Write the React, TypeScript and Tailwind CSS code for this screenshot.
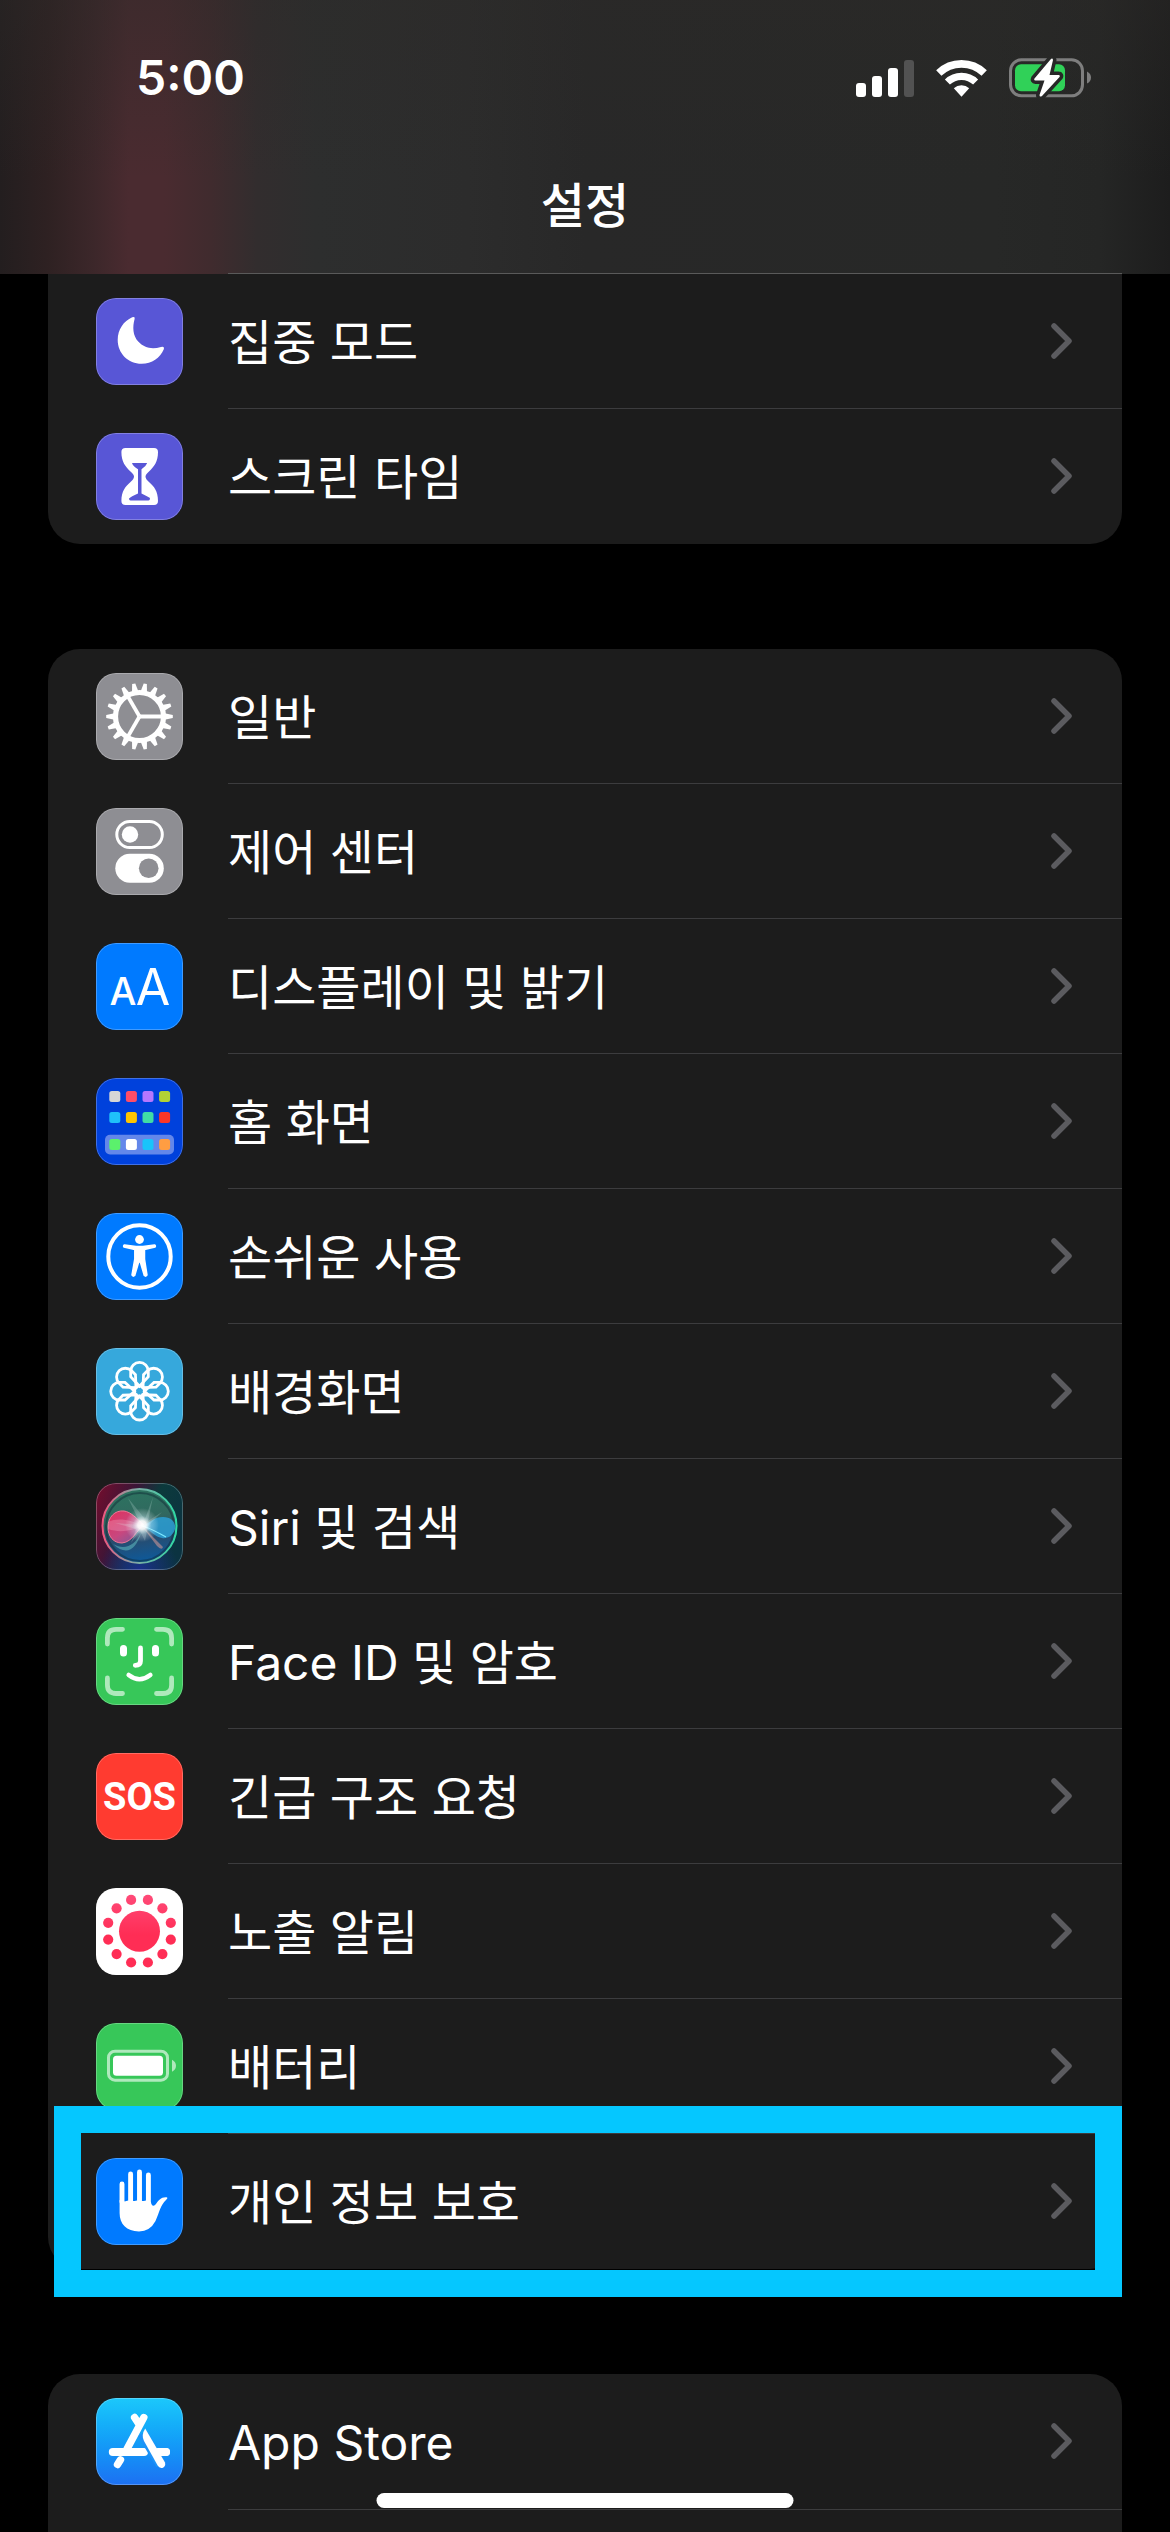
import type { ReactNode } from "react";

type Item = {
  id: string;
  label: string;
  tile: string;
  icon: ReactNode;
  highlighted?: boolean;
};

const turns = (count: number, offset = 0) =>
  Array.from({ length: count }, (_, i) => offset + (i * 360) / count);

const moon = (
  <path
    fill="#fff"
    d="M36.2 19.2Q39.4 18.2 38.6 21C36.4 29 36.8 37.5 42.2 43.6C48.3 50.3 56.5 51.4 65 48.9Q68.9 48 67.7 51.6C64 60 56 65.8 45.6 65.8C32.2 65.8 21.7 55.3 21.7 42C21.7 31.5 27.6 23 36.2 19.2Z"
  />
);

const hourglass = (
  <>
    <path
      fill="#fff"
      d="M29.500 15H58Q62 15 62 19C62 29 58 33.500 53 38.500Q49.500 41.500 49.500 43.500Q49.500 46 53 49C58 53.500 62 58 62 68Q62 72 58 72H29.500Q25.400 72 25.400 68C25.400 58 29.500 53.500 34.500 49Q38 46 38 43.500Q38 41.500 34.500 38.500C29.500 33.500 25.400 29 25.400 19Q25.400 15 29.500 15Z"
    />
    <path
      fill="#5856d6"
      d="M36 30H51.200Q50 33.500 45.500 36.300V60.500Q52 63.500 54 65Q54 67.500 52.500 67.500H34.500Q33 67.500 33 65.500Q35 63.500 42 60.500V36.300Q37 33.500 36 30Z"
    />
  </>
);

const gear = (
  <g transform="translate(43.500 43.500)">
    {turns(18).map((angle) => (
      <path key={angle} d="M25-3.200L33.300-1.600V1.600L25 3.200Z" fill="#fff" transform={`rotate(${angle})`} />
    ))}
    <circle r="24" fill="none" stroke="#fff" strokeWidth="5.200" />
    {turns(3).map((angle) => (
      <path key={angle} d="M0 0H23" stroke="#fff" strokeWidth="3.800" transform={`rotate(${angle})`} />
    ))}
  </g>
);

const toggles = (
  <>
    <rect x="20.800" y="13.500" width="45.500" height="26" rx="13" fill="none" stroke="#fff" strokeWidth="3" />
    <circle cx="34" cy="26.500" r="8.200" fill="#fff" />
    <rect x="19.300" y="45.800" width="48.500" height="29" rx="14.500" fill="#fff" />
    <circle cx="52.700" cy="60.300" r="9.800" fill="#8e8e93" />
  </>
);

const textSize = (
  <g fill="#fff" fontFamily="Inter, sans-serif" textAnchor="middle">
    <text x="27" y="62" fontSize="38" fontWeight="500">
      A
    </text>
    <text x="57" y="62" fontSize="50" fontWeight="400">
      A
    </text>
  </g>
);

const homeColors = [
  ["#d6d6d6", "#ff4d67", "#b677ff", "#b2d235"],
  ["#1fc0fa", "#ffc502", "#40dca5", "#fc3628"],
  ["#5bf16c", "#ffffff", "#19c4fa", "#ff9d42"],
];
const homeRows = [13, 34, 61];

const homeScreen = (
  <>
    <rect x="9" y="56.700" width="69" height="19.800" rx="5" fill="#6387ea" />
    {homeColors.map((row, r) =>
      row.map((color, c) => (
        <rect key={color} x={13.3 + c * 16.6} y={homeRows[r]} width="11" height="11" rx="2.500" fill={color} />
      )),
    )}
  </>
);

const accessibility = (
  <>
    <circle cx="43.500" cy="43.500" r="31.200" fill="none" stroke="#fff" strokeWidth="4" />
    <circle cx="43.500" cy="26.500" r="4.400" fill="#fff" />
    <path
      fill="#fff"
      stroke="#fff"
      strokeWidth="1.500"
      strokeLinejoin="round"
      d="M28.500 32L40 33.600H47L58.500 32Q60 32.700 59 34L48.500 36.500V46L51 62Q50 64 48.300 62.500L44.300 49H42.700L38.700 62.500Q37 64 36 62L38.800 46V36.500L28 34Q27 32.700 28.500 32Z"
    />
  </>
);

const flower = (
  <g transform="translate(43.500 43.200)" fill="none" stroke="#fff" strokeWidth="2.800">
    {turns(8).map((angle) => (
      <path key={angle} d="M0-5L-8.800-14.500V-20A8.800 8.800 0 0 1 8.800-20V-14.500Z" transform={`rotate(${angle})`} />
    ))}
    <circle r="5" />
  </g>
);

const siri = (
  <>
    <defs>
      <linearGradient id="siri-base" x1="0" y1="0.200" x2="1" y2="0.600">
        <stop offset="0" stopColor="#6d0e2e" />
        <stop offset="0.350" stopColor="#3a1637" />
        <stop offset="0.600" stopColor="#0c3a3c" />
        <stop offset="1" stopColor="#0b3341" />
      </linearGradient>
      <linearGradient id="siri-orb" x1="0.350" y1="0" x2="0.500" y2="1">
        <stop offset="0" stopColor="#2c7460" />
        <stop offset="0.400" stopColor="#31685f" />
        <stop offset="0.650" stopColor="#2a4b6b" />
        <stop offset="1" stopColor="#0c5a9c" />
      </linearGradient>
      <linearGradient id="siri-ring" x1="0" y1="0.500" x2="1" y2="0.500">
        <stop offset="0" stopColor="#f0567e" />
        <stop offset="0.450" stopColor="#7fa9a4" />
        <stop offset="1" stopColor="#2fd9a4" />
      </linearGradient>
      <linearGradient id="siri-pink" x1="0" y1="0" x2="0.800" y2="1">
        <stop offset="0" stopColor="#e0315c" />
        <stop offset="0.600" stopColor="#c8477f" />
        <stop offset="1" stopColor="#7c5b9b" />
      </linearGradient>
      <radialGradient id="siri-blue-corner" cx="0.500" cy="1" r="0.450">
        <stop offset="0" stopColor="#1b2f8c" />
        <stop offset="1" stopColor="#1b2f8c" stopOpacity="0" />
      </radialGradient>
      <radialGradient id="siri-glow">
        <stop offset="0" stopColor="#fff" />
        <stop offset="0.250" stopColor="#fff" stopOpacity="0.900" />
        <stop offset="0.550" stopColor="#d9f6ff" stopOpacity="0.350" />
        <stop offset="1" stopColor="#fff" stopOpacity="0" />
      </radialGradient>
    </defs>
    <rect width="87" height="87" fill="url(#siri-base)" />
    <rect width="87" height="87" fill="url(#siri-blue-corner)" />
    <circle cx="43.500" cy="43" r="37" fill="url(#siri-orb)" stroke="url(#siri-ring)" strokeWidth="2" />
    <circle cx="44" cy="44" r="34" fill="none" stroke="#0d2634" strokeWidth="2" opacity="0.450" />
    <path
      d="M12 44C12 34 19 27 28 28C35 29 40 35 48 42C41 46 37 59 26 60C17 60 12 53 12 44Z"
      fill="url(#siri-pink)"
      stroke="#ef7795"
      strokeWidth="1"
    />
    <path d="M12 39C22 34 36 37 46 43C36 48 23 50 12 46Z" fill="#ffb7cb" opacity="0.280" />
    <path d="M46 43C55 39 58 34 67 34C76 34 80 40 79 46C77 53 71 56 66 55C58 54 55 47 46 43Z" fill="#2b9fd3" opacity="0.850" />
    <path d="M46 43C55 45 62 50 70 54" stroke="#7de9ff" strokeWidth="1.200" fill="none" />
    <path d="M46 43L67 64Q66 68 61 63Z" fill="#d89a98" opacity="0.550" />
    <path d="M17 61C29 68 39 62 45 50C40 66 31 74 17 61Z" fill="#6fd3ce" opacity="0.450" />
    <path d="M45 42L32 15L49 36L57 14L52 38L66 29L52 43L49 58L44 48L35 60L40 46L19 40Z" fill="#dffcf4" opacity="0.200" />
    <circle cx="46" cy="42" r="17" fill="url(#siri-glow)" />
  </>
);

const faceId = (
  <g fill="none" stroke="#fff" strokeLinecap="round">
    <path
      strokeWidth="4.800"
      opacity="0.600"
      d="M11.400 26V20Q11.400 11.300 20 11.300H26.500M60.500 11.300H67Q75.600 11.300 75.600 20V26M75.600 60V67Q75.600 75.500 67 75.500H60.500M26.500 75.500H20Q11.400 75.500 11.400 67V60"
    />
    <path strokeWidth="7" d="M27.500 30.500V35M59.500 30.500V35" />
    <path strokeWidth="4.800" d="M44.500 30V43Q44.500 47.300 39.300 47.300" />
    <path strokeWidth="4.600" d="M32.700 57Q43.500 65.500 54.300 57" />
  </g>
);

const sos = (
  <text
    x="43.500"
    y="57"
    fill="#fff"
    fontFamily="Roboto, sans-serif"
    fontSize="38"
    fontWeight="700"
    textAnchor="middle"
  >
    SOS
  </text>
);

const exposure = (
  <>
    <defs>
      <linearGradient id="exposure" gradientUnits="userSpaceOnUse" x1="0" y1="-36" x2="0" y2="36">
        <stop offset="0" stopColor="#ff4a78" />
        <stop offset="0.550" stopColor="#ff2d55" />
      </linearGradient>
    </defs>
    <g transform="translate(43.500 43.200)" fill="url(#exposure)">
      <circle r="20.500" />
      {turns(12, 15).map((angle) => {
        const rad = (angle * Math.PI) / 180;
        return <circle key={angle} cx={32.4 * Math.cos(rad)} cy={32.4 * Math.sin(rad)} r="5.100" />;
      })}
    </g>
  </>
);

const battery = (
  <>
    <rect x="12.500" y="28.200" width="59" height="29" rx="6.500" fill="none" stroke="#fff" strokeWidth="3" opacity="0.600" />
    <rect x="17" y="32.700" width="50" height="20" rx="3.500" fill="#fff" />
    <path d="M76 36.800Q80 39 80 42.700Q80 46.500 76 48.800Z" fill="#fff" opacity="0.600" />
  </>
);

const hand = (
  <>
    <path
      d="M26 26V44M34.600 16V46M43.500 14V46M52.400 17V46"
      stroke="#fff"
      strokeWidth="4.900"
      strokeLinecap="round"
    />
    <path
      fill="#fff"
      d="M23.600 42Q26 44.500 32.200 42.500Q36 43.500 41 42.500Q46 43.500 50 42.500L54.900 44Q56 50 59.500 46.500C62.500 42.500 65.500 38.500 71.200 39.400Q72 40.300 70 42C64.500 47 63.500 54 59.500 63Q54 73.400 43 73.400C30.500 73.400 23.600 66 23.600 55Z"
    />
  </>
);

const appStore = (
  <g fill="none" stroke="#fff" strokeWidth="7.400" strokeLinecap="round">
    <path d="M38.600 19.500L43.500 27M47.800 19.500L31 51" />
    <path d="M16.800 54H48" strokeWidth="8" />
    <path d="M58 54H70" strokeWidth="8" />
    <path d="M46.500 35.500L65 66.500" stroke="#1d93f8" strokeWidth="10.500" strokeLinecap="butt" />
    <path d="M62 54H70" strokeWidth="8" />
    <path fill="#fff" stroke="none" d="M49.200 30.500L69 64.500Q70 68 67 69.700Q63.500 70.700 61.800 67.800L48 43Q45 37 49.200 30.500Z" />
    <path d="M24.500 61.800L21.500 66.500" />
  </g>
);

const focusItems: Item[] = [
  { id: "focus", label: "집중 모드", tile: "bg-[#5856d6]", icon: moon },
  { id: "screen-time", label: "스크린 타임", tile: "bg-[#5856d6]", icon: hourglass },
];

const generalItems: Item[] = [
  { id: "general", label: "일반", tile: "bg-[#8e8e93]", icon: gear },
  { id: "control-center", label: "제어 센터", tile: "bg-[#8e8e93]", icon: toggles },
  { id: "display", label: "디스플레이 및 밝기", tile: "bg-[#007aff]", icon: textSize },
  { id: "home-screen", label: "홈 화면", tile: "bg-[#0041dc]", icon: homeScreen },
  { id: "accessibility", label: "손쉬운 사용", tile: "bg-[#007aff]", icon: accessibility },
  { id: "wallpaper", label: "배경화면", tile: "bg-[#36a8dc]", icon: flower },
  { id: "siri", label: "Siri 및 검색", tile: "bg-[#0b3341]", icon: siri },
  { id: "face-id", label: "Face ID 및 암호", tile: "bg-[#37c759]", icon: faceId },
  { id: "sos", label: "긴급 구조 요청", tile: "bg-[#ff3b30]", icon: sos },
  { id: "exposure", label: "노출 알림", tile: "bg-white", icon: exposure },
  { id: "battery", label: "배터리", tile: "bg-[#37c759]", icon: battery },
  { id: "privacy", label: "개인 정보 보호", tile: "bg-[#007aff]", icon: hand, highlighted: true },
];

const storeItems: Item[] = [
  { id: "app-store", label: "App Store", tile: "bg-linear-to-b from-[#1cc8fb] to-[#1d70f2]", icon: appStore },
];

function Row({ item }: { item: Item }) {
  return (
    <li className="group relative">
      <a href={`#${item.id}`} className="flex h-[135px] items-center pl-12">
        <span className={`relative size-[87px] shrink-0 overflow-hidden rounded-[20px] ${item.tile}`}>
          <svg viewBox="0 0 87 87" className="size-full" aria-hidden="true">
            {item.icon}
          </svg>
          <span className="absolute inset-0 rounded-[20px] border border-white/25" />
        </span>
        <span className="ml-[45px] flex h-full flex-1 items-center justify-between border-b border-[#3c3c3e] pr-[50px] group-last:border-transparent">
          <span className="pt-1 text-[48px] leading-[60px] text-white">{item.label}</span>
          <svg viewBox="0 0 21 36" className="h-9 w-[21px]" fill="none" aria-hidden="true">
            <path d="M3 3L18 18L3 33" stroke="#5b5b5f" strokeWidth="5.500" strokeLinecap="round" strokeLinejoin="round" />
          </svg>
        </span>
      </a>
      {item.highlighted && (
        <span className="pointer-events-none absolute -top-7 right-0 -bottom-7 left-1.5 border-[27px] border-[#05c7ff]" />
      )}
    </li>
  );
}

function StatusBar() {
  return (
    <div className="flex h-[156px] items-center justify-between pr-[79px] pl-[136px]">
      <time className="text-[48px] leading-[60px] font-semibold">5:00</time>
      <div className="flex items-center gap-[22px]">
        <svg viewBox="0 0 58 37" className="h-[37px] w-[58px]" fill="#fff" aria-hidden="true">
          <rect y="23" width="10" height="14" rx="3" />
          <rect x="16" y="16" width="10" height="21" rx="3" />
          <rect x="32" y="8" width="10" height="29" rx="3" />
          <rect x="48" width="10" height="37" rx="3" fill="#525252" />
        </svg>
        <svg viewBox="0 0 51 37" className="h-[37px] w-[51px]" fill="none" stroke="#fff" aria-hidden="true">
          <path d="M2.800 13A32.700 32.700 0 0 1 48.200 13" strokeWidth="7.600" />
          <path d="M11.400 22A20.300 20.300 0 0 1 39.600 22" strokeWidth="7.200" />
          <path d="M17.800 28.300A11.500 11.500 0 0 1 33.200 28.300L25.500 36.700Z" fill="#fff" stroke="none" />
        </svg>
        <svg viewBox="0 0 82 40" className="h-10 w-[82px]" aria-hidden="true">
          <rect x="1.500" y="1.800" width="72" height="36" rx="11" fill="none" stroke="#7e7e7e" strokeWidth="3" />
          <path d="M78 13.500Q82 15.500 82 19.500Q82 23.500 78 25.500Z" fill="#7e7e7e" />
          <rect x="6" y="6.300" width="50" height="27" rx="6" fill="#30d158" />
          <path
            d="M41.500 1.500L25.500 20.500Q24.500 22.500 26.500 22.500H35.500L30.500 37Q30.500 39.500 33 38L50.500 19Q51.500 17 49.500 17H40.500L44 2Q43.500-0.500 41.500 1.500Z"
            fill="#fff"
            stroke="#272827"
            strokeWidth="7"
            strokeLinejoin="round"
            paintOrder="stroke"
          />
        </svg>
      </div>
    </div>
  );
}

export default function App() {
  return (
    <div className="flex h-screen flex-col overflow-hidden bg-black font-[Inter,'Noto_Sans_CJK_KR',sans-serif] text-white">
      <header className="shrink-0 bg-[linear-gradient(to_bottom,rgba(44,42,40,0.4),transparent_65%),linear-gradient(to_right,#231e1f_0%,#2e2122_4%,#3c272a_8%,#4a2b30_11%,#4a2b30_14%,#402b2e_18%,#322d2e_22%,#2d2e2e_27%,#2c2c2c_40%,#282828_50%,#272827_85%,#252625_94%,#1d1d1d_100%)]">
        <StatusBar />
        <h1 className="pt-5 pb-[37px] text-center text-[48px] leading-[60px] font-medium">설정</h1>
        <div className="mr-12 ml-[228px] h-px bg-[#5a5a5a]" />
      </header>
      <main className="flex flex-1 flex-col gap-[105px] px-12">
        <ul className="shrink-0 rounded-b-[32px] bg-[#1c1c1c]">
          {focusItems.map((item) => (
            <Row key={item.id} item={item} />
          ))}
        </ul>
        <ul className="shrink-0 rounded-[32px] bg-[#1c1c1c]">
          {generalItems.map((item) => (
            <Row key={item.id} item={item} />
          ))}
        </ul>
        <div className="flex-1 rounded-t-[32px] bg-[#1c1c1c]">
          <ul>
            {storeItems.map((item) => (
              <Row key={item.id} item={item} />
            ))}
          </ul>
          <div className="ml-[180px] h-px bg-[#3c3c3e]" />
        </div>
      </main>
      <div className="fixed bottom-6 left-1/2 h-[15px] w-[417px] -translate-x-1/2 rounded-full bg-white" />
    </div>
  );
}
